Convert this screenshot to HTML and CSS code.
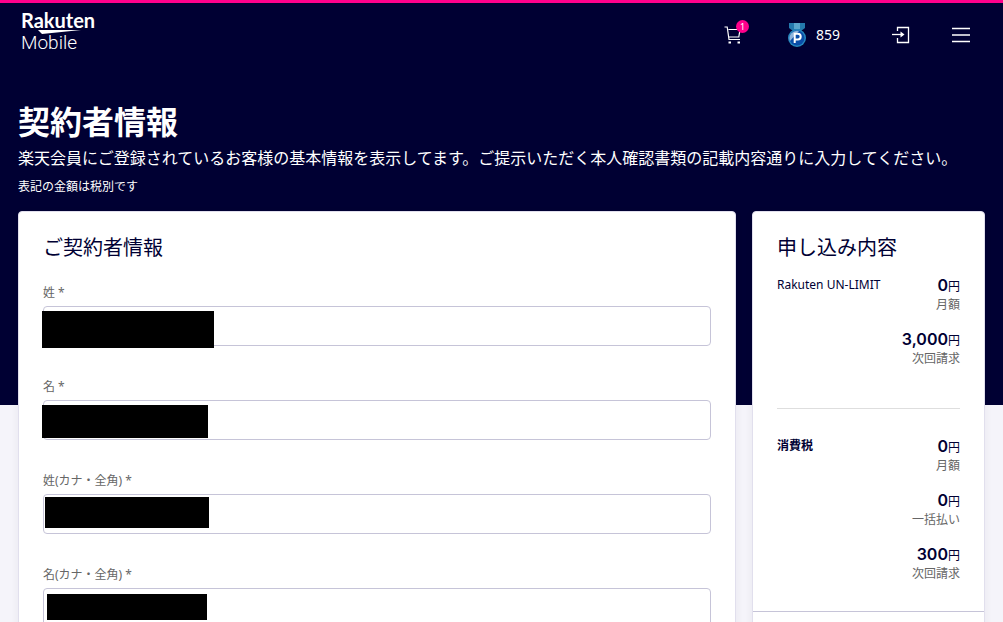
FILE: index.html
```html
<!DOCTYPE html>
<html lang="ja">
<head>
    <meta charset="UTF-8">
    <meta name="viewport" content="width=device-width, initial-scale=1.0">
    <title>契約者情報 | Rakuten Mobile</title>
    <link rel="stylesheet" href="styles.css">
</head>
<body>

<header class="header">
    <a class="logo" href="#">
        <span class="logo-rakuten">Rakuten</span>
        <svg class="logo-swoosh" width="44" height="5" viewBox="0 0 44 5" aria-hidden="true">
            <path d="M0 1H43L4 5Z" fill="#fff"/>
        </svg>
        <span class="logo-mobile">Mobile</span>
    </a>

    <nav class="header-nav">
        <a class="cart" href="#" aria-label="カート">
            <svg width="18" height="18" viewBox="0 0 18 18" fill="none" stroke="#fff" stroke-width="1.200">
                <path d="M0.500 1H3.200L5 13.500H16M4.500 3.500H16L14.800 11H5.200"/>
                <path d="M4.500 15.500h2.500v2h-2.500zM13.500 15.500h2.500v2h-2.500z" fill="#fff" stroke="none"/>
            </svg>
            <span class="cart-badge">1</span>
        </a>
        <a class="points" href="#">
            <svg width="20" height="24" viewBox="0 0 20 24" aria-hidden="true">
                <path d="M2 0H18V5L14 8H6L2 5Z" fill="#2479ad"/>
                <path d="M7 0H13V6H7Z" fill="#5aa6cc"/>
                <circle cx="10" cy="15" r="9" fill="#2587be"/>
                <circle cx="10" cy="15" r="7.500" fill="#0a4da8"/>
                <path d="M3 18A7.500 7.500 0 0 1 12 8Z" fill="#8fb4dc"/>
                <path d="M7.700 20V10.700H10.800a2.900 2.900 0 0 1 0 5.800H7.700" fill="none" stroke="#fff" stroke-width="2"/>
            </svg>
            <span>859</span>
        </a>
        <a class="login" href="#" aria-label="ログイン">
            <svg width="18" height="18" viewBox="0 0 18 18" fill="none" stroke="#fff" stroke-width="1.300">
                <path d="M5.500 5V1.500H16.500V16.500H5.500V12"/>
                <path d="M0 8.500H11"/>
                <path d="M8.500 5.500L12.500 8.500L8.500 11.500Z" fill="#fff" stroke="none"/>
            </svg>
        </a>
        <button class="menu" type="button" aria-label="メニュー">
            <svg width="18" height="16" viewBox="0 0 18 16" fill="none" stroke="#fff" stroke-width="1.400">
                <path d="M0 1.500H18M0 8H18M0 14.500H18"/>
            </svg>
        </button>
    </nav>
</header>

<section class="hero">
    <h1>契約者情報</h1>
    <p class="lead">楽天会員にご登録されているお客様の基本情報を表示してます。ご提示いただく本人確認書類の記載内容通りに入力してください。</p>
    <p class="note">表記の金額は税別です</p>
</section>

<main class="content">
    <form class="card contract">
        <h2>ご契約者情報</h2>

        <div class="field">
            <label for="sei">姓 *</label>
            <div class="input-box">
                <input type="text" id="sei">
                <span class="mask mask-sei"></span>
            </div>
        </div>

        <div class="field">
            <label for="mei">名 *</label>
            <div class="input-box">
                <input type="text" id="mei">
                <span class="mask mask-mei"></span>
            </div>
        </div>

        <div class="field">
            <label for="sei-kana">姓(カナ・全角) *</label>
            <div class="input-box">
                <input type="text" id="sei-kana">
                <span class="mask mask-sei-kana"></span>
            </div>
        </div>

        <div class="field">
            <label for="mei-kana">名(カナ・全角) *</label>
            <div class="input-box">
                <input type="text" id="mei-kana">
                <span class="mask mask-mei-kana"></span>
            </div>
        </div>
    </form>

    <aside class="card summary">
        <h2>申し込み内容</h2>

        <div class="summary-row">
            <h3 class="plan">Rakuten UN-LIMIT</h3>
            <ul class="prices">
                <li><strong>0</strong>円<small>月額</small></li>
                <li><strong>3,000</strong>円<small>次回請求</small></li>
            </ul>
        </div>

        <div class="summary-row tax">
            <h3>消費税</h3>
            <ul class="prices">
                <li><strong>0</strong>円<small>月額</small></li>
                <li><strong>0</strong>円<small>一括払い</small></li>
                <li><strong>300</strong>円<small>次回請求</small></li>
            </ul>
        </div>

        <div class="summary-footer"></div>
    </aside>
</main>

</body>
</html>
```

FILE: styles.css
```css
* {
    box-sizing: border-box;
}

body {
    margin: 0;
    background-color: #f5f4fa;
    color: #000033;
    font-family: "Noto Sans", "Noto Sans CJK JP", sans-serif;
    font-size: 12px;
    line-height: 18px;
}

h1, h2, h3, p, ul {
    margin: 0;
    padding: 0;
}

a {
    color: #fff;
    text-decoration: none;
}

svg {
    display: block;
}

/* header */
.header {
    display: flex;
    justify-content: space-between;
    align-items: center;
    height: 67px;
    padding: 0 33px 0 21px;
    border-top: 3px solid #ff008c;
    background-color: #000033;
}

.logo {
    display: flex;
    flex-direction: column;
    font-size: 20px;
    line-height: 18px;
    padding-bottom: 8px;
}

.logo-rakuten {
    font-family: Lato, sans-serif;
    font-weight: 700;
}

.logo-swoosh {
    margin-left: 17px;
}

.logo-mobile {
    font-family: Roboto, sans-serif;
    font-size: 19px;
    font-weight: 300;
}

.header-nav {
    display: flex;
    align-items: center;
}

.cart {
    position: relative;
    margin-right: 45px;
}

.cart-badge {
    position: absolute;
    top: -6px;
    right: -7px;
    width: 13px;
    height: 13px;
    border-radius: 50%;
    background-color: #ff008c;
    font-size: 9px;
    line-height: 13px;
    text-align: center;
}

.points {
    display: flex;
    align-items: center;
    gap: 9px;
    margin-right: 52px;
    font-size: 14px;
}

.login {
    margin-right: 42px;
}

.menu {
    padding: 0;
    border: none;
    background: none;
    cursor: pointer;
}

/* the cards overlap the lower part of the hero */
.hero {
    padding: 35px 18px 209px;
    background-color: #000033;
    color: #fff;
}

h1 {
    font-size: 32px;
    line-height: 40px;
    font-weight: 700;
}

.lead {
    margin: 4px 0 8px;
    font-size: 16px;
    line-height: 24px;
}

.content {
    display: grid;
    grid-template-columns: minmax(0, 1fr) 233px;
    gap: 16px;
    margin-top: -194px;
    padding: 0 18px;
}

.card {
    padding: 20px 24px;
    border: 1px solid #e1dfed;
    border-radius: 4px;
    background-color: #fff;
    box-shadow: 0 2px 8px rgba(0, 0, 51, 0.06);
}

h2 {
    font-size: 20px;
    line-height: 32px;
    font-weight: 400;
}

/* form */
.contract h2 {
    margin-bottom: 20px;
}

.field {
    margin-bottom: 32px;
}

label {
    display: block;
    margin-bottom: 4px;
    color: #666;
}

.input-box {
    position: relative;
}

input[type="text"] {
    display: block;
    width: 100%;
    height: 40px;
    padding: 8px;
    border: 1px solid #c6c4d8;
    border-radius: 4px;
    background-color: #fff;
    font-size: 16px;
}

.mask {
    position: absolute;
    background-color: #000;
}

.mask-sei {
    top: 5px;
    left: -1px;
    width: 172px;
    height: 37px;
}

.mask-mei {
    top: 5px;
    left: -1px;
    width: 166px;
    height: 33px;
}

.mask-sei-kana {
    top: 3px;
    left: 2px;
    width: 164px;
    height: 31px;
}

.mask-mei-kana {
    top: 6px;
    left: 4px;
    width: 160px;
    height: 26px;
}

/* summary */
.summary h2 {
    margin-bottom: 11px;
}

.summary-row {
    display: flex;
    justify-content: space-between;
}

h3 {
    font-size: 12px;
    line-height: 20px;
    font-weight: 700;
}

h3.plan {
    font-weight: 400;
}

.tax {
    margin-top: 41px;
    padding-top: 27px;
    border-top: 1px solid #dedede;
}

.prices {
    display: flex;
    flex-direction: column;
    gap: 18px;
    padding-top: 2px;
    list-style: none;
    text-align: right;
    line-height: 20px;
}

.prices strong {
    font-family: Inter, sans-serif;
    font-size: 16px;
    line-height: 16px;
    font-weight: 600;
}

.prices small {
    display: block;
    color: #666;
    font-size: 12px;
    line-height: 16px;
}

.summary-footer {
    margin: 29px -24px 0;
    border-top: 1px solid #c6c4d8;
}
```
